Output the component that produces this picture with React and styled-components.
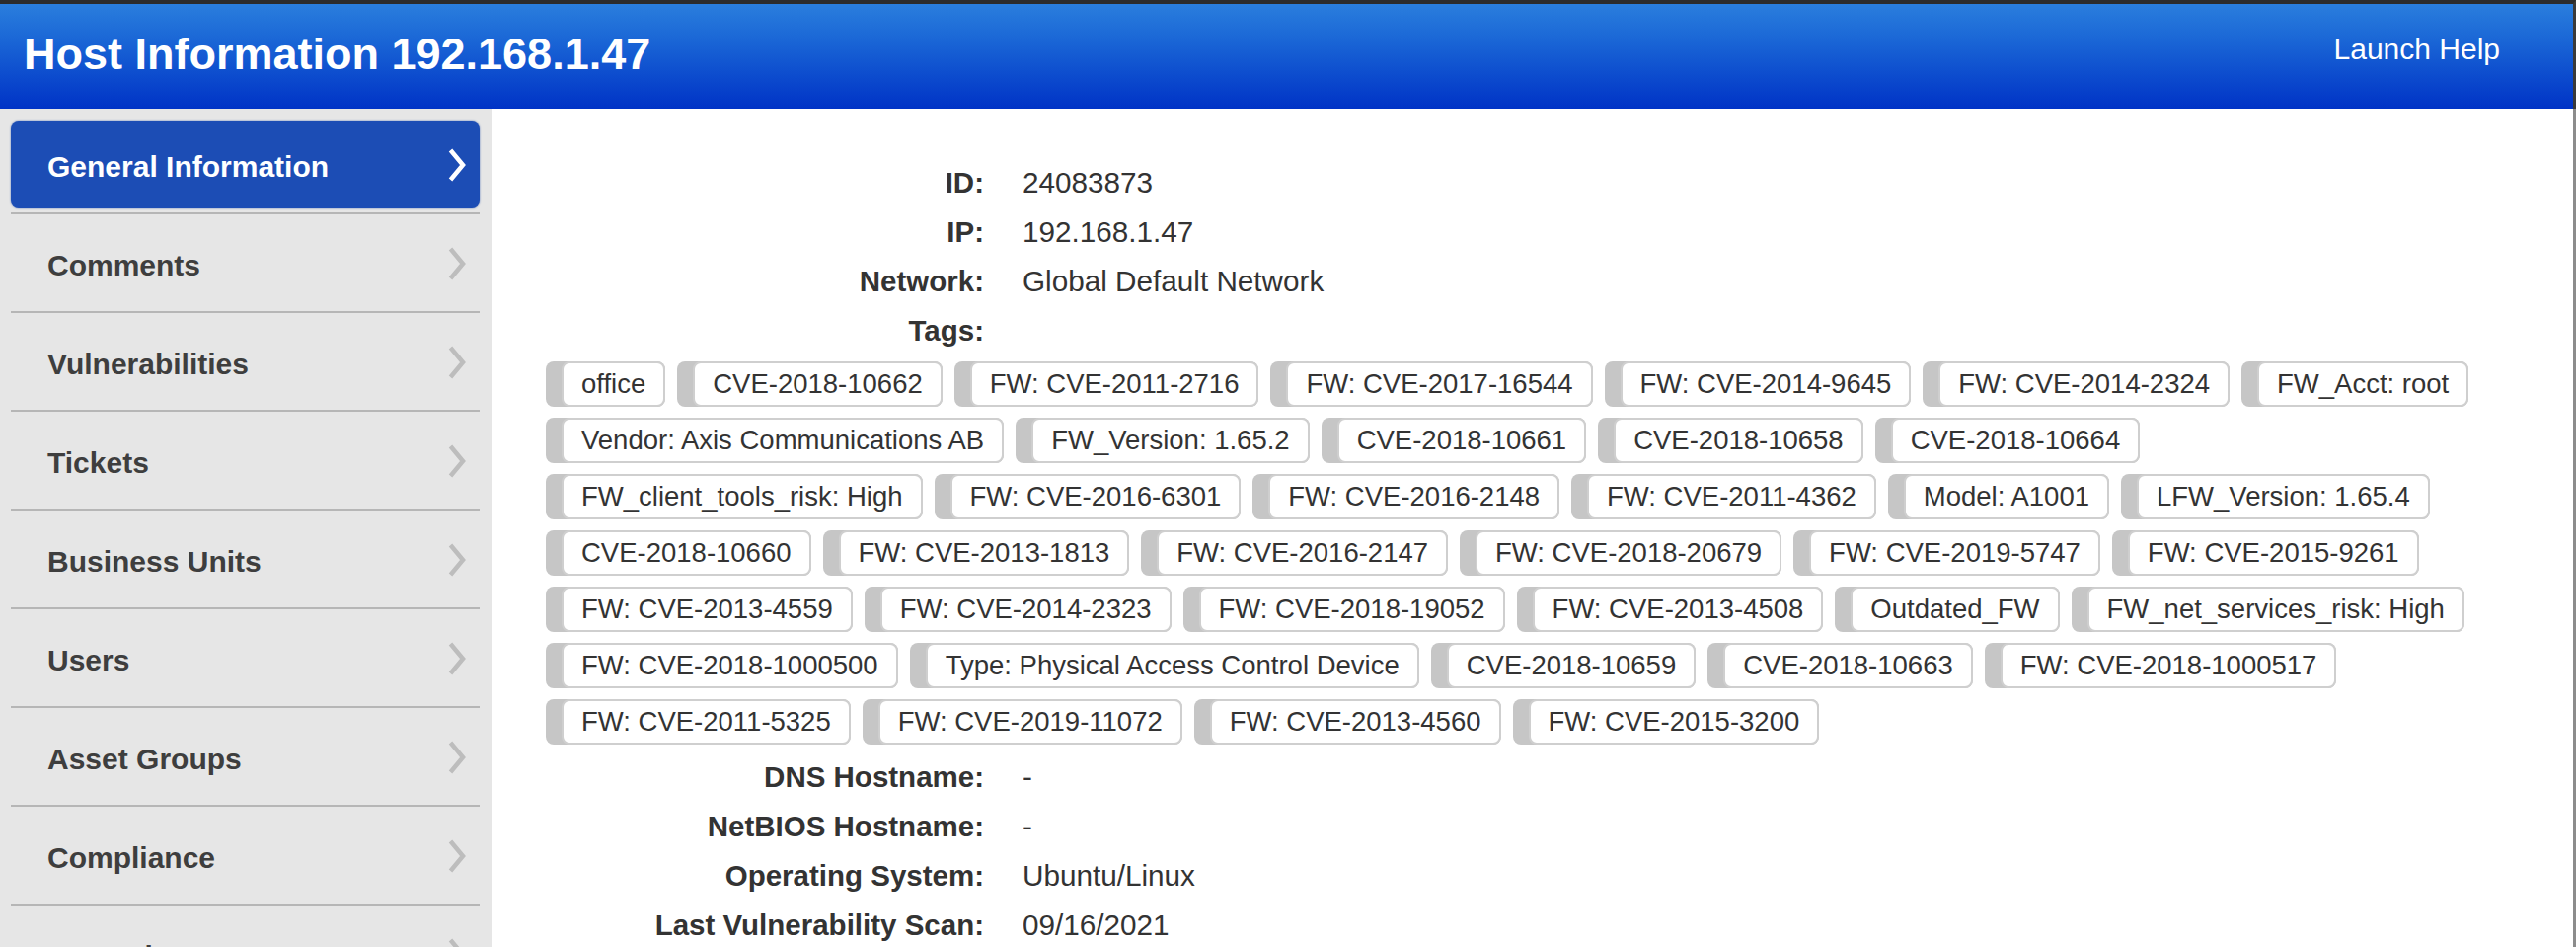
import React from 'react';
import styled, { createGlobalStyle } from 'styled-components';

const GlobalStyle = createGlobalStyle`
  html, body {
    margin: 0;
    padding: 0;
  }

  body {
    font-family: "Liberation Sans", Arial, Helvetica, sans-serif;
    color: #333;
    background: #fff;
    overflow: hidden;
  }
`;

const navItems = [
  'General Information',
  'Comments',
  'Vulnerabilities',
  'Tickets',
  'Business Units',
  'Users',
  'Asset Groups',
  'Compliance',
  'Exceptions',
];

const tags = [
  'office',
  'CVE-2018-10662',
  'FW: CVE-2011-2716',
  'FW: CVE-2017-16544',
  'FW: CVE-2014-9645',
  'FW: CVE-2014-2324',
  'FW_Acct: root',
  'Vendor: Axis Communications AB',
  'FW_Version: 1.65.2',
  'CVE-2018-10661',
  'CVE-2018-10658',
  'CVE-2018-10664',
  'FW_client_tools_risk: High',
  'FW: CVE-2016-6301',
  'FW: CVE-2016-2148',
  'FW: CVE-2011-4362',
  'Model: A1001',
  'LFW_Version: 1.65.4',
  'CVE-2018-10660',
  'FW: CVE-2013-1813',
  'FW: CVE-2016-2147',
  'FW: CVE-2018-20679',
  'FW: CVE-2019-5747',
  'FW: CVE-2015-9261',
  'FW: CVE-2013-4559',
  'FW: CVE-2014-2323',
  'FW: CVE-2018-19052',
  'FW: CVE-2013-4508',
  'Outdated_FW',
  'FW_net_services_risk: High',
  'FW: CVE-2018-1000500',
  'Type: Physical Access Control Device',
  'CVE-2018-10659',
  'CVE-2018-10663',
  'FW: CVE-2018-1000517',
  'FW: CVE-2011-5325',
  'FW: CVE-2019-11072',
  'FW: CVE-2013-4560',
  'FW: CVE-2015-3200',
];

const topFields = [
  ['ID:', '24083873'],
  ['IP:', '192.168.1.47'],
  ['Network:', 'Global Default Network'],
];

const bottomFields = [
  ['DNS Hostname:', '-'],
  ['NetBIOS Hostname:', '-'],
  ['Operating System:', 'Ubuntu/Linux'],
  ['Last Vulnerability Scan:', '09/16/2021'],
];

const Chevron = ({ color }) => (
  <svg width="18" height="34" viewBox="0 0 18 34">
    <polyline
      points="2.5,2 15,17 2.5,32"
      fill="none"
      stroke={color}
      strokeWidth="4.5"
    />
  </svg>
);

const App = () => (
  <Page>
    <GlobalStyle />
    <Header>
      <Title>Host Information 192.168.1.47</Title>
      <HelpLink>Launch Help</HelpLink>
    </Header>
    <Body>
      <Sidebar>
        {navItems.map((label, i) => (
          <NavRow key={label}>
            <NavLink active={i === 0}>
              <NavText>{label}</NavText>
              <Chevron color={i === 0 ? '#ffffff' : '#bdbdbd'} />
            </NavLink>
          </NavRow>
        ))}
      </Sidebar>
      <Content>
        <InfoGrid>
          {topFields.map(([label, value]) => (
            <React.Fragment key={label}>
              <Label>{label}</Label>
              <Value>{value}</Value>
            </React.Fragment>
          ))}
          <Label>Tags:</Label>
          <Value />
          <TagList>
            {tags.map((tag) => (
              <Tag key={tag}>
                <TagText>{tag}</TagText>
              </Tag>
            ))}
          </TagList>
          {bottomFields.map(([label, value]) => (
            <React.Fragment key={label}>
              <Label>{label}</Label>
              <Value>{value}</Value>
            </React.Fragment>
          ))}
        </InfoGrid>
      </Content>
    </Body>
  </Page>
);

const Page = styled.div`
  display: flex;
  flex-direction: column;
  height: 100vh;
  overflow: hidden;
`;

const Header = styled.header`
  box-sizing: border-box;
  height: 110px;
  flex: none;
  display: flex;
  justify-content: space-between;
  align-items: flex-start;
  padding: 28px 74px 0 24px;
  border-top: 4px solid #2c2c2c;
  border-right: 3px solid #3a3a3a;
  background: linear-gradient(to bottom, #2a7edd 0%, #1a66d6 35%, #0033c6 100%);
  color: #fff;
`;

const Title = styled.h1`
  margin: 0;
  font-size: 45px;
  font-weight: bold;
  line-height: 1;
`;

const HelpLink = styled.span`
  margin-top: 3px;
  font-size: 30px;
  line-height: 1;
  cursor: pointer;
`;

const Body = styled.div`
  display: flex;
  flex: 1;
  min-height: 0;
`;

const Sidebar = styled.nav`
  box-sizing: border-box;
  width: 498px;
  flex: none;
  padding: 7px 12px 0 11px;
  background: #e6e6e6;
`;

const NavRow = styled.div`
  border-bottom: 2px solid #b6b6b6;
`;

const NavLink = styled.div`
  display: flex;
  align-items: center;
  justify-content: space-between;
  height: 88px;
  margin: 6px 0 4px;
  padding: 0 14px 0 37px;
  border-radius: 8px;
  font-size: 30px;
  font-weight: bold;
  color: ${(p) => (p.active ? '#ffffff' : '#3e3e3e')};
  background: ${(p) => (p.active ? '#1c4db5' : 'transparent')};
  box-shadow: ${(p) => (p.active ? '0 0 2px rgba(40, 80, 170, 0.8)' : 'none')};
  cursor: pointer;
`;

const NavText = styled.span`
  padding-top: 3px;
`;

const Content = styled.main`
  flex: 1;
  min-width: 0;
  padding: 50px 70px 0 55px;
  border-right: 3px solid #8c8c8c;
  overflow: hidden;
`;

const InfoGrid = styled.div`
  display: grid;
  grid-template-columns: 444px 1fr;
  column-gap: 39px;
`;

const Label = styled.div`
  text-align: right;
  font-size: 29.5px;
  font-weight: bold;
  line-height: 50px;
  color: #333;
  white-space: nowrap;
`;

const Value = styled.div`
  font-size: 29.7px;
  line-height: 50px;
  color: #333;
`;

const TagList = styled.div`
  grid-column: 1 / -1;
  display: flex;
  flex-wrap: wrap;
  gap: 11px 12px;
  margin: 6px 0 8px;
`;

const Tag = styled.span`
  box-sizing: border-box;
  display: inline-flex;
  height: 46px;
  padding-left: 16px;
  border-radius: 8px;
  background: #c6c6c6;
`;

const TagText = styled.span`
  box-sizing: border-box;
  display: flex;
  align-items: center;
  padding: 0 18px;
  border: 2px solid #cfcfcf;
  border-radius: 8px;
  background: #fff;
  font-size: 27.5px;
  color: #333;
  white-space: nowrap;
`;

export default App;
